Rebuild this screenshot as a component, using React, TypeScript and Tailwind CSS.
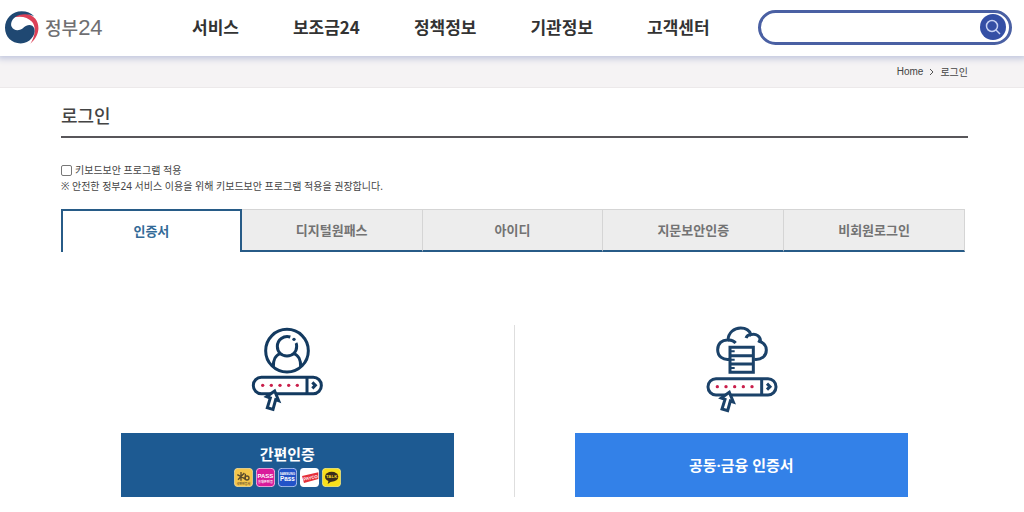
import { useState } from 'react';
import clsx from 'clsx';

const MENU = ['서비스', '보조금24', '정책정보', '기관정보', '고객센터'];
const TABS = ['인증서', '디지털원패스', '아이디', '지문보안인증', '비회원로그인'];

function Logo() {
  return (
    <a href="#" className="flex w-[187px] shrink-0 items-center gap-[6px] text-[#6f6f72]">
      <svg viewBox="0 0 102 98" className="h-[33px] w-[34px]" aria-hidden="true">
        <path d="M22 20C46 2 76 4 91 23c15 20 13 50-15 75 15-24 18-50 5-66C68 17 45 13 22 20Z" fill="#dc4057" />
        <path d="M0 50C0 21 22 0 50 0c15 0 29 5 38 16C70 6 44 7 29 19c-9 7-13 19-9 28 6 13 25 13 36 2 10-10 27-11 32 3 6 19-14 45-41 45C20 97 0 77 0 50Z" fill="#1f4872" />
      </svg>
      <span className="text-lg leading-6 font-medium">정부<span className="font-['Liberation_Sans',sans-serif] text-[22px] leading-6">24</span></span>
    </a>
  );
}

function PasswordBar() {
  return (
    <>
      <rect x="40" y="187" width="204" height="49" rx="24" />
      <path d="M201 187v49" />
      <path d="M217 202l9 9-9 9" strokeWidth="9" />
      <g fill="#c91f4b" stroke="none">
        <circle cx="68" cy="211" r="5" />
        <circle cx="94" cy="211" r="5" />
        <circle cx="120" cy="211" r="5" />
        <circle cx="146" cy="211" r="5" />
        <circle cx="172" cy="211" r="5" />
      </g>
      <path d="M104 228L80 245l11 4-9 29 17 5 8-29 9 3Z" fill="#fff" />
    </>
  );
}

function PersonIcon() {
  return (
    <svg viewBox="30 30 225 264" className="h-[88px] w-[75px]" fill="none" stroke="#133a60" strokeWidth="9" aria-hidden="true">
      <circle cx="141" cy="107" r="64" />
      <path d="M151 66c-20-6-39 8-39 28 0 17 12 29 29 29s29-12 29-29c0-4 0-7-2-10" />
      <circle cx="162" cy="73" r="5" fill="#133a60" stroke="none" />
      <path d="M100 156c-1-20 7-36 21-41M182 156c1-20-7-36-21-41" />
      <PasswordBar />
    </svg>
  );
}

function CloudIcon() {
  return (
    <svg viewBox="41 30 225 264" className="h-[88px] w-[75px]" fill="none" stroke="#1b4269" strokeWidth="9" aria-hidden="true">
      <path d="M118 133c-20 3-36-9-36-29 0-18 13-30 31-29 1-22 18-36 38-36 16 0 27 8 31 20 15-5 30 6 28 21 10 4 18 13 18 25 0 18-14 30-36 28" />
      <path d="M113 75c10-1 18 3 23 9M182 59c-8 0-13 4-15 10M211 81l-8-4" />
      <path d="M119 97h70v75h-70zM119 122h70M119 147h70" />
      <path d="M121 109h12M121 134h12M121 159h12" strokeWidth="6" />
      <g transform="translate(13 4)">
        <PasswordBar />
      </g>
    </svg>
  );
}

/** Small rounded app badges listed under the simple-login label. */
function ProviderBadges() {
  return (
    <span className="flex gap-[3px]">
      <svg viewBox="0 0 57 57" className="size-[19px]" fontFamily="Noto Sans CJK KR, sans-serif" fontWeight="700" textAnchor="middle">
        <rect x="1" y="1" width="55" height="55" rx="11" fill="#f5c64b" stroke="#f8e5b1" strokeWidth="2" />
        <path d="M21 12v26M10 20l22 12M31 15L12 35M34 17v19" stroke="#5b4a2c" strokeWidth="4" fill="none" />
        <circle cx="39" cy="30" r="6" stroke="#5b4a2c" strokeWidth="4" fill="none" />
        <text x="28" y="50" fontSize="9" fill="#5b4a2c">국민인증서</text>
      </svg>
      <svg viewBox="0 0 57 57" className="size-[19px]" fontFamily="Liberation Sans, Noto Sans CJK KR, sans-serif" fontWeight="700" textAnchor="middle">
        <rect x="1" y="1" width="55" height="55" rx="11" fill="#d91b9b" stroke="#efb3dc" strokeWidth="3" />
        <text x="28" y="31" fontSize="18" fill="#fff">PASS</text>
        <text x="28" y="44" fontSize="10" fill="#fff">휴대폰인증</text>
      </svg>
      <svg viewBox="0 0 57 57" className="size-[19px]" fontFamily="Liberation Sans, sans-serif" fontWeight="700" textAnchor="middle">
        <rect x="1" y="1" width="55" height="55" rx="11" fill="#2252c8" stroke="#a9bfea" strokeWidth="3" />
        <text x="28" y="21" fontSize="9" fill="#fff">SAMSUNG</text>
        <text x="28" y="40" fontSize="19" fill="#fff">Pass</text>
      </svg>
      <svg viewBox="0 0 57 57" className="size-[19px]" fontFamily="Liberation Sans, sans-serif" fontWeight="700" textAnchor="middle">
        <rect width="57" height="57" rx="11" fill="#fff" />
        <path d="M6 24l49-11v20L12 45Z" fill="#e5303a" />
        <text x="32" y="34" fontSize="13" fill="#fff" transform="rotate(-12 31 30)">PAYCO</text>
      </svg>
      <svg viewBox="0 0 57 57" className="size-[19px]" fontFamily="Liberation Sans, sans-serif" fontWeight="700" textAnchor="middle">
        <rect x="1" y="1" width="55" height="55" rx="11" fill="#f8df1c" stroke="#f8eea0" strokeWidth="2" />
        <ellipse cx="29" cy="26" rx="20" ry="15" fill="#3b2c1b" />
        <path d="M20 36l-3 12 13-9Z" fill="#3b2c1b" />
        <text x="29" y="31" fontSize="13" fill="#f8df1c">TALK</text>
      </svg>
    </span>
  );
}

export default function App() {
  const [tab, setTab] = useState(TABS[0]);
  const [secure, setSecure] = useState(false);

  return (
    <div className="min-h-screen bg-white font-['Noto_Sans_CJK_KR',sans-serif] text-[#444]">
      <header className="relative flex h-14 items-center bg-white pr-3 pb-[2px] pl-[5px] shadow-[0_1px_6px_2px_#c3c8de]">
        <Logo />
        <nav className="flex gap-[54px] text-[17px] leading-6 font-bold whitespace-nowrap text-[#333]">
          {MENU.map((m) => <a key={m} href="#">{m}</a>)}
        </nav>
        <form className="ml-12 flex h-[35px] flex-1 items-center rounded-full border-3 border-[#4a60a3] pr-[3px] pl-4" onSubmit={(e) => e.preventDefault()}>
          <input type="search" aria-label="검색어" className="min-w-0 flex-1 text-sm outline-none" />
          <button type="submit" aria-label="검색" className="flex size-[26px] items-center justify-center rounded-full bg-[#344fa5]">
            <svg viewBox="0 0 16 16" className="size-4" fill="none" stroke="#c7d2f3" strokeWidth="1.5">
              <circle cx="7" cy="7" r="5.5" />
              <path d="M11 11l4 4" />
            </svg>
          </button>
        </form>
      </header>

      <div className="flex h-8 items-center justify-end gap-[6px] border-b border-[#ece9ea] bg-[#f5f3f4] pr-14 text-[10px]">
        <a href="#" className="font-['Liberation_Sans',sans-serif]">Home</a>
        <svg viewBox="0 0 5 8" className="h-2 w-[5px]" fill="none" stroke="#555">
          <path d="M1 1l3 3-3 3" />
        </svg>
        <span>로그인</span>
      </div>

      <main className="pr-14 pl-[61px]">
        <h1 className="border-b-2 border-[#58565a] pt-[14px] pb-2 text-lg leading-[26px] font-medium">로그인</h1>

        <div className="pt-6 font-['Noto_Sans','Noto_Sans_CJK_KR',sans-serif] text-[10px] leading-4">
          <label className="flex items-center gap-[3px]">
            <input
              type="checkbox"
              checked={secure}
              onChange={(e) => setSecure(e.target.checked)}
              className="size-[11px] appearance-none rounded-xs border border-[#777] bg-white checked:bg-[#1d5a92]"
            />
            키보드보안 프로그램 적용
          </label>
          <p>※ 안전한 정부24 서비스 이용을 위해 키보드보안 프로그램 적용을 권장합니다.</p>
        </div>

        <div role="tablist" className="mt-[15px] mr-[3px] grid h-[43px] grid-cols-5 text-[13px] font-bold">
          {TABS.map((t) => (
            <button
              key={t}
              role="tab"
              aria-selected={t === tab}
              onClick={() => setTab(t)}
              className={clsx(
                t === tab
                  ? 'border-2 border-b-0 border-[#275b87] bg-white pb-[2px] text-[#336a97]'
                  : 'border-t border-r border-b-2 border-t-[#d5d5d5] border-r-[#d5d5d5] border-b-[#275b87] bg-[#ededed] text-[#737373]',
              )}
            >
              {t}
            </button>
          ))}
        </div>

        <section className="mt-[73px] grid grid-cols-2 divide-x divide-[#dedede]">
          <div className="flex flex-col items-center gap-5 px-[60px]">
            <PersonIcon />
            <button className="flex h-16 w-full flex-col items-center justify-center gap-1 bg-[#1d5a92] text-[15px] leading-5 font-bold text-white">
              간편인증
              <ProviderBadges />
            </button>
          </div>
          <div className="flex flex-col items-center gap-5 px-[60px]">
            <CloudIcon />
            <button className="h-16 w-full bg-[#3381e8] font-['Noto_Sans','Noto_Sans_CJK_KR',sans-serif] text-[15px] leading-5 font-bold text-white">공동·금융 인증서</button>
          </div>
        </section>
      </main>
    </div>
  );
}
